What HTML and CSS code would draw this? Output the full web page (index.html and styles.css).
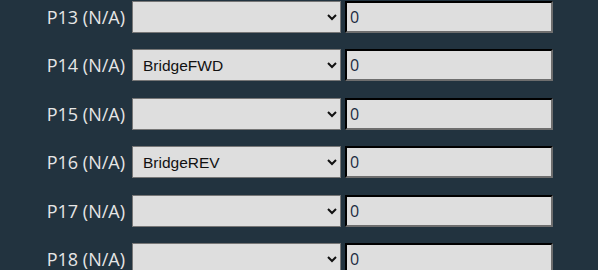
FILE: index.html
```html
<!DOCTYPE html>
<html lang="en">
<head>
  <meta charset="UTF-8">
  <title>Pin Config</title>
  <link rel="stylesheet" href="styles.css">
</head>
<body>

  <div class="pins">
    <div class="pin-row">
      <label class="pin-label">P13 (N/A)</label>
      <select class="pin-func"><option></option><option>BridgeFWD</option><option>BridgeREV</option></select>
      <input type="text" class="pin-value" value="0">
    </div>
    <div class="pin-row">
      <label class="pin-label">P14 (N/A)</label>
      <select class="pin-func"><option></option><option selected>BridgeFWD</option><option>BridgeREV</option></select>
      <input type="text" class="pin-value" value="0">
    </div>
    <div class="pin-row">
      <label class="pin-label">P15 (N/A)</label>
      <select class="pin-func"><option></option><option>BridgeFWD</option><option>BridgeREV</option></select>
      <input type="text" class="pin-value" value="0">
    </div>
    <div class="pin-row">
      <label class="pin-label">P16 (N/A)</label>
      <select class="pin-func"><option></option><option>BridgeFWD</option><option selected>BridgeREV</option></select>
      <input type="text" class="pin-value" value="0">
    </div>
    <div class="pin-row">
      <label class="pin-label">P17 (N/A)</label>
      <select class="pin-func"><option></option><option>BridgeFWD</option><option>BridgeREV</option></select>
      <input type="text" class="pin-value" value="0">
    </div>
    <div class="pin-row">
      <label class="pin-label">P18 (N/A)</label>
      <select class="pin-func"><option></option><option>BridgeFWD</option><option>BridgeREV</option></select>
      <input type="text" class="pin-value" value="0">
    </div>
  </div>

</body>
</html>
```

FILE: styles.css
```css
body {
  margin: 0;
  padding-top: 1px;
  background: #22333f;
  font-family: 'Open Sans', sans-serif;
  overflow: hidden;
}
.pins {
  display: flex;
  flex-direction: column;
  gap: 16.4px;
}
.pin-row {
  display: flex;
  align-items: center;
}
.pin-label {
  width: 125px;
  padding-right: 7px;
  text-align: right;
  color: #e6e6e6;
  font-size: 18px;
}
.pin-func {
  width: 209px;
  height: 32px;
  margin-right: 4px;
  padding: 0 6px;
  background: #dedede;
  border: 1px solid #767676;
  color: #111;
  font-family: 'Liberation Sans', sans-serif;
  font-size: 15.5px;
}
.pin-value {
  width: 208px;
  height: 32px;
  box-sizing: border-box;
  padding: 0 3px;
  background: #dedede;
  border: 2px inset #777;
  border-top-color: #1e1e1e;
  border-left-color: #1e1e1e;
  border-bottom-color: #6e6e6e;
  border-right-color: #6e6e6e;
  color: #1a2a40;
  font-family: 'Open Sans', sans-serif;
  font-size: 16px;
}
```
